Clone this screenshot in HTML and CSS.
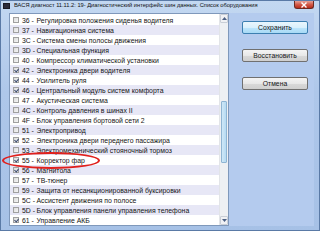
FILE: index.html
```html
<!DOCTYPE html>
<html>
<head>
<meta charset="utf-8">
<link rel="stylesheet" href="styles.css">
</head>
<body>
<div class="window">
  <div class="titlebar">
    <div class="appicon"></div>
    <div class="title">ВАСЯ диагност 11.11.2: 19- Диагностический интерфейс шин данных. Список оборудования</div>
    <div class="close"><svg width="8" height="6" viewBox="0 0 8 6"><path d="M1.5 0.5 L6.5 5.5 M6.5 0.5 L1.5 5.5" stroke="#fff" stroke-width="1.4"/></svg></div>
  </div>
  <div class="body">
    <div class="list">
      <div class="rows">
        <div class="row"><span class="cb"></span><span class="code">36 -</span><span>Регулировка положения сиденья водителя</span></div>
        <div class="row"><span class="cb"></span><span class="code">37 -</span><span>Навигационная система</span></div>
        <div class="row"><span class="cb"></span><span class="code">3C -</span><span>Система смены полосы движения</span></div>
        <div class="row"><span class="cb"></span><span class="code">3D -</span><span>Специальная функция</span></div>
        <div class="row"><span class="cb"></span><span class="code">40 -</span><span>Компрессор климатической установки</span></div>
        <div class="row"><span class="cb on"></span><span class="code">42 -</span><span>Электроника двери водителя</span></div>
        <div class="row"><span class="cb on"></span><span class="code">44 -</span><span>Усилитель руля</span></div>
        <div class="row"><span class="cb on"></span><span class="code">46 -</span><span>Центральный модуль систем комфорта</span></div>
        <div class="row"><span class="cb"></span><span class="code">47 -</span><span>Акустическая система</span></div>
        <div class="row"><span class="cb"></span><span class="code">4C -</span><span>Контроль давления в шинах II</span></div>
        <div class="row"><span class="cb"></span><span class="code">4F -</span><span>Блок управления бортовой сети 2</span></div>
        <div class="row"><span class="cb"></span><span class="code">51 -</span><span>Электропривод</span></div>
        <div class="row"><span class="cb on"></span><span class="code">52 -</span><span>Электроника двери переднего пассажира</span></div>
        <div class="row"><span class="cb"></span><span class="code">53 -</span><span>Электромеханический стояночный тормоз</span></div>
        <div class="row"><span class="cb on"></span><span class="code">55 -</span><span>Корректор фар</span></div>
        <div class="row"><span class="cb on"></span><span class="code">56 -</span><span>Магнитола</span></div>
        <div class="row"><span class="cb"></span><span class="code">57 -</span><span>ТВ-тюнер</span></div>
        <div class="row"><span class="cb"></span><span class="code">59 -</span><span>Защита от несанкционированной буксировки</span></div>
        <div class="row"><span class="cb"></span><span class="code">5C -</span><span>Ассистент движения по полосе</span></div>
        <div class="row"><span class="cb"></span><span class="code">5D -</span><span>Блок управления панели управления телефона</span></div>
        <div class="row"><span class="cb on"></span><span class="code">61 -</span><span>Управление АКБ</span></div>
      </div>
      <div class="scrollbar">
        <div class="arrow"><svg width="5" height="3" viewBox="0 0 5 3"><path d="M0 3 L2.5 0 L5 3Z" fill="#4d6185"/></svg></div>
        <div class="track"><div class="thumb"></div></div>
        <div class="arrow"><svg width="5" height="3" viewBox="0 0 5 3"><path d="M0 0 L2.5 3 L5 0Z" fill="#4d6185"/></svg></div>
      </div>
    </div>
    <div class="panel">
      <button class="btn default">Сохранить</button>
      <button class="btn">Восстановить</button>
      <button class="btn">Отмена</button>
    </div>
  </div>
  <div class="ellipse"></div>
</div>
</body>
</html>
```
FILE: styles.css
```css
* { box-sizing: border-box; }
html, body { margin: 0; padding: 0; }
body { width: 320px; height: 231px; overflow: hidden; font-family: "Liberation Sans", Arial, sans-serif; }
.window {
  position: relative;
  width: 320px; height: 231px;
  background: linear-gradient(180deg, #c3d8f1 0%, #aec7ea 40%, #a6c1e6 100%);
  display: flex; flex-direction: column;
  border: 1px solid #5a7aa6;
}
.titlebar {
  height: 12px; flex: none;
  display: flex; align-items: flex-start;
  padding-left: 2px;
}
.appicon {
  width: 7px; height: 6px; margin-top: 2px;
  background: #2b2b3a; border: 1px solid #1a1a24;
}
.title {
  font-size: 5.7px; line-height: 9px; color: #101010;
  margin-left: 4px; white-space: nowrap; flex: 1; overflow: hidden;
}
.close {
  width: 20px; height: 8px; margin-right: 5px;
  background: linear-gradient(180deg, #e7a197 0%, #d25a48 50%, #b72b1b 100%);
  border: 1px solid #6b2a22; border-top: none;
  border-radius: 0 0 3px 3px;
  display: flex; align-items: center; justify-content: center;
}
.body {
  flex: 1; display: flex;
  padding: 0 5px 5px 8px;
}
.list {
  width: 220px; height: 213px;
  background: #fff;
  border: 1px solid #7f98bb;
  display: flex;
}
.rows { flex: 1; padding-top: 1px; overflow: hidden; }
.row {
  height: 10px; display: flex; align-items: center;
  font-size: 6.9px; color: #151515; white-space: nowrap; overflow: hidden;
  padding-left: 3px;
}
.row:nth-child(even) { background: #e7e7f6; }
.cb {
  width: 6px; height: 6px; flex: none;
  border: 1px solid #a0a0a0;
  background: linear-gradient(135deg, #dcdcdc, #f6f6f6);
  margin-right: 3px; position: relative;
}
.cb.on::after {
  content: ""; position: absolute; left: 1px; top: 0px;
  width: 2px; height: 3px;
  border-right: 1px solid #3a4a70; border-bottom: 1px solid #3a4a70;
  transform: rotate(40deg);
}
.code { width: 14.5px; flex: none; }
.scrollbar {
  width: 9px; flex: none;
  background: #eef0f3; border-left: 1px solid #e2e4e8;
  display: flex; flex-direction: column;
}
.arrow {
  height: 9px; display: flex; align-items: center; justify-content: center;
  background: #f0f1f4; border: 1px solid #c9ced6; border-radius: 1px;
}
.track { flex: 1; padding-top: 78px; }
.thumb {
  height: 62px; margin: 0 1px;
  background: linear-gradient(90deg, #cfe8f7, #b6daf2);
  border: 1px solid #8fb5d3; border-radius: 1px;
}
.panel {
  flex: 1; height: 213px;
  background: #b4cbee;
  display: flex; flex-direction: column; align-items: flex-start;
  padding: 8px 0 0 13px; gap: 15px;
}
.btn {
  width: 66px; height: 13px; padding: 0;
  font-family: "Liberation Sans", Arial, sans-serif; font-size: 6.8px; color: #151515;
  background: linear-gradient(180deg, #f4f4f4 0%, #e8e8e8 50%, #d9d9d9 51%, #cfcfcf 100%);
  border: 1px solid #707070; border-radius: 2px;
}
.btn.default {
  border-color: #3c7fb1;
  background: linear-gradient(180deg, #eaf6fd 0%, #d9f0fc 50%, #bee6fd 51%, #a7d9f5 100%);
}
.ellipse {
  position: absolute; left: 1px; top: 151px;
  width: 98px; height: 17px;
  border: 2px solid #e0201c; border-radius: 50%;
}
```
